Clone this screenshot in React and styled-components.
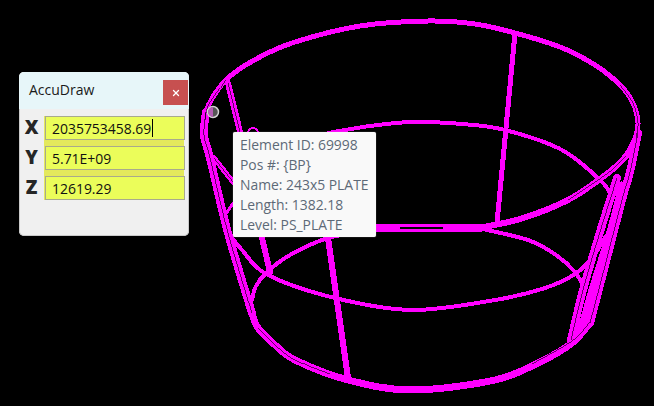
import React from "react";
import styled, { createGlobalStyle } from "styled-components";
import { X } from "lucide-react";

const Global = createGlobalStyle`
  html, body { margin: 0; padding: 0; background: #000; }
  #root { width: 654px; height: 406px; overflow: hidden; }
`;

const Viewport = styled.main`
  position: relative;
  width: 654px;
  height: 406px;
  background: #000;
  overflow: hidden;
  font-family: "Open Sans", "Noto Sans", sans-serif;
`;

const Drawing = styled.svg`
  position: absolute;
  inset: 0;
  display: block;
`;

const Panel = styled.section`
  position: absolute;
  left: 19px;
  top: 72px;
  width: 170px;
  height: 164px;
  box-sizing: border-box;
  display: flex;
  flex-direction: column;
  background: #f0f0f0;
  border-radius: 5px;
  overflow: hidden;
  box-shadow: inset 0 0 0 1px #c9c9c9;
`;

const TitleBar = styled.header`
  height: 37px;
  flex: none;
  box-sizing: border-box;
  display: flex;
  align-items: flex-start;
  justify-content: space-between;
  padding: 8px 1px 0 10px;
  background: #e7f6f9;
`;

const Title = styled.h1`
  margin: 0;
  font-size: 14px;
  line-height: 20px;
  font-weight: 400;
  color: #1a1a1a;
`;

const CloseButton = styled.button`
  width: 25px;
  height: 25px;
  padding: 0;
  border: 0;
  display: flex;
  align-items: center;
  justify-content: center;
  color: #fff;
  background: #c75050;
`;

const Body = styled.div`
  display: flex;
  padding-top: 7px;
`;

const Labels = styled.div`
  width: 25px;
  flex: none;
  display: flex;
  flex-direction: column;
  gap: 6px;
`;

const Axis = styled.span`
  height: 22px;
  margin-bottom: 2px;
  display: flex;
  align-items: center;
  justify-content: center;
  font-size: 19px;
  font-weight: 800;
  color: #262626;
`;

const Fields = styled.div`
  width: 140px;
  display: flex;
  flex-direction: column;
  gap: 6px;
  background: #e4e95c;
`;

const Field = styled.div`
  width: 140px;
  height: 24px;
  margin-left: 1px;
  box-sizing: border-box;
  display: flex;
  align-items: center;
  padding-left: 6px;
  border: 1px solid #a9aa8c;
  background: #ebfd5a;
  color: #111;
  font-size: 13.95px;
`;

const Caret = styled.span`
  width: 1px;
  height: 18px;
  margin-left: 1px;
  background: #000;
`;

const Tooltip = styled.aside`
  position: absolute;
  left: 233px;
  top: 132px;
  width: 143px;
  height: 105px;
  box-sizing: border-box;
  padding: 3px 0 0 7px;
  background: #f9f9f9;
  border-radius: 2px;
  box-shadow: 0 0 1px #bbb;
  color: #5d6977;
  font-size: 13.9px;
  line-height: 20px;
  white-space: nowrap;
`;

const smooth = (p) => {
  let d = `M${p[0][0]} ${p[0][1]}`;
  for (let i = 0; i < p.length - 1; i++) {
    const a = p[Math.max(i - 1, 0)], b = p[i], c = p[i + 1], e = p[Math.min(i + 2, p.length - 1)];
    d += `C${b[0] + (c[0] - a[0]) / 6} ${b[1] + (c[1] - a[1]) / 6} ${c[0] - (e[0] - b[0]) / 6} ${c[1] - (e[1] - b[1]) / 6} ${c[0]} ${c[1]}`;
  }
  return d;
};

const M = "#ff00ff";
const wires = [
  // top rim
  { w: 5, p: [[203,127],[209,104],[228,78],[258,58],[295,42],[360,26],[428,21],[475,24],[515,33],[560,47],[595,65],[620,85],[633,103],[638,123],[635,140]] },
  // inner back arc of upper ring
  { w: 4, p: [[328,133],[370,126],[412,122],[462,124],[505,130],[562,150],[602,182],[612,198]] },
  // front arc of upper ring
  { w: 4, p: [[228,232],[242,250],[268,275],[335,298],[412,310],[495,300],[545,288],[575,274],[592,258],[606,236]] },
  // back arc of lower ring
  { w: 4, p: [[252,300],[256,286],[267,272],[290,255],[328,238],[382,228]] },
  { w: 4, p: [[478,228],[528,240],[556,255],[575,272],[584,288]] },
  // flat band behind the tooltip
  { w: 8, p: [[370,228],[430,228],[480,228]] },
  { w: 6, p: [[478,228],[520,219],[568,200],[608,173],[626,156],[636,138]] },
  // ribs
  { w: 5, p: [[515,33],[497,223]] },
  { w: 6, p: [[328,238],[348,378]] },
  { w: 6, p: [[228,83],[240,132]] },
  { w: 6, p: [[262,238],[270,272]] },
  // left side bundle
  { w: 8, p: [[206,112],[204,135],[210,158],[228,233],[252,313]] },
  { w: 5, p: [[214,158],[233,182]] },
  { w: 3, p: [[233,203],[226,214]] },
  // bottom rim
  { w: 7, p: [[252,313],[258,328],[275,345],[295,360],[348,380],[412,390],[495,380],[540,362],[572,343],[590,323]] },
  // right side bundle
  { w: 8, p: [[590,323],[600,285],[622,200],[630,172],[638,133]] },
  { w: 8, p: [[571,340],[583,290],[600,232],[617,178]] },
  { w: 7, p: [[580,333],[592,290],[610,232],[622,185]] },
];

const slits = [
  [[206,112],[204,135],[210,158],[228,233],[252,313]],
  [[214,158],[233,182]],
  [[228,83],[240,132]],
  [[590,323],[600,285],[622,200],[630,172],[638,133]],
  [[571,340],[583,290],[600,232],[617,178]],
  [[258,328],[275,345],[295,360],[330,374]],
  [[532,364],[572,341],[590,322]],
  [[568,200],[608,173],[626,156]],
  [[620,85],[633,103],[638,123],[636,138]],
  [[226,80],[209,104],[205,120]],
];

const Wireframe = () => (
  <Drawing width="654" height="406" viewBox="0 0 654 406" fill="none" shapeRendering="crispEdges">
    {wires.map((g, i) => (
      <path key={i} d={smooth(g.p)} stroke={M} strokeWidth={g.w} strokeLinecap="round" strokeLinejoin="round" />
    ))}
    {slits.map((p, i) => (
      <path key={i} d={smooth(p)} stroke="#000" strokeWidth="0.6" />
    ))}
    <path d="M400 227.5H443" stroke="#000" strokeWidth="2" />
    <circle cx="253" cy="133" r="5" stroke={M} strokeWidth="2" />
    <g shapeRendering="auto">
      <circle cx="213" cy="112" r="5.5" fill="#555" stroke="#d4d4d4" strokeWidth="1.5" />
      <path d="M213 107a5 5 0 0 0 0 10z" fill="#b45cb4" />
    </g>
  </Drawing>
);

const rows = [
  { axis: "X", value: "2035753458.69", active: true },
  { axis: "Y", value: "5.71E+09" },
  { axis: "Z", value: "12619.29" },
];

const details = ["Element ID: 69998", "Pos #: {BP}", "Name: 243x5 PLATE", "Length: 1382.18", "Level: PS_PLATE"];

export default function App() {
  return (
    <Viewport>
      <Global />
      <Wireframe />
      <Panel>
        <TitleBar>
          <Title>AccuDraw</Title>
          <CloseButton aria-label="Close"><X size={10} strokeWidth={3} /></CloseButton>
        </TitleBar>
        <Body>
          <Labels>
            {rows.map((r) => <Axis key={r.axis}>{r.axis}</Axis>)}
          </Labels>
          <Fields>
            {rows.map((r) => (
              <Field key={r.axis}>{r.value}{r.active && <Caret />}</Field>
            ))}
          </Fields>
        </Body>
      </Panel>
      <Tooltip>
        {details.map((d) => <div key={d}>{d}</div>)}
      </Tooltip>
    </Viewport>
  );
}
